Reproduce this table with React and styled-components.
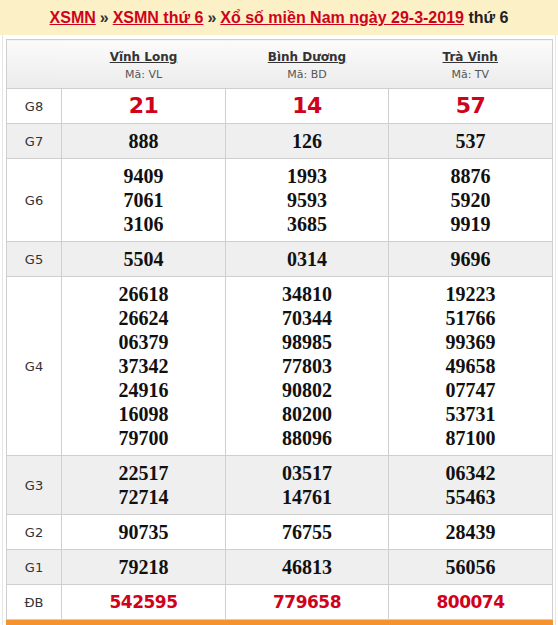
import React from "react";
import styled, { createGlobalStyle } from "styled-components";

const GlobalStyle = createGlobalStyle`
  html, body {
    margin: 0;
    padding: 0;
    overflow: hidden;
    background: #fff;
  }
`;

const TitleBar = styled.div`
  height: 35px;
  line-height: 35px;
  background-color: #fcf0c6;
  text-align: center;
  font-family: "Liberation Sans", Arial, sans-serif;
  font-weight: bold;
  font-size: 16px;
  color: #222;
`;

const TitleLink = styled.a`
  color: #d0021b;
  text-decoration: underline;
`;

const Sep = styled.span`
  color: #333;
  margin: 0 4px;
`;

const Wrapper = styled.div`
  margin: 0 2px;
  padding: 4px 3px 0;
  border-left: 1px solid #e6e6e6;
  border-right: 1px solid #e6e6e6;
`;

const Table = styled.table`
  width: 546px;
  border-collapse: collapse;
  table-layout: fixed;
  border: 1px solid #cfcfcf;
`;

const HeadCell = styled.th`
  padding: 9px 0 5px;
  font-weight: normal;
  text-align: center;
  background: linear-gradient(to bottom, #fbfbfb 0%, #ebebeb 100%);
  border-bottom: 1px solid #cfcfcf;
`;

const Province = styled.a`
  display: block;
  line-height: 17px;
  font-family: "DejaVu Sans", Verdana, sans-serif;
  font-weight: bold;
  font-size: 12px;
  color: #333;
  text-decoration: underline;
`;

const Code = styled.div`
  line-height: 17px;
  font-family: "DejaVu Sans", Verdana, sans-serif;
  font-size: 11px;
  color: #555;
`;

const Row = styled.tr`
  background-color: ${(p) => (p.$alt ? "#efefef" : "#fff")};
`;

const Label = styled.td`
  padding: 5px 0;
  text-align: center;
  vertical-align: middle;
  border: 1px solid #cfcfcf;
  font-family: "DejaVu Sans", Verdana, sans-serif;
  font-size: 13px;
  color: #333;
`;

const Cell = styled.td`
  padding: 5px 0;
  text-align: center;
  vertical-align: middle;
  border: 1px solid #cfcfcf;
`;

const Num = styled.div`
  line-height: 24px;
  font-family: ${(p) =>
    p.$red ? '"DejaVu Sans", Verdana, sans-serif' : '"Liberation Serif", "Times New Roman", serif'};
  font-weight: bold;
  font-size: ${(p) => (p.$big ? "22px" : p.$red ? "17px" : "20px")};
  letter-spacing: ${(p) => (p.$big ? "-0.6px" : p.$red ? "-0.5px" : "0")};
  color: ${(p) => (p.$red ? "#d0021b" : "#111")};
`;

const Footer = styled.div`
  height: 6px;
  width: 547px;
  background-color: #f5932f;
`;

const provinces = [
  { name: "Vĩnh Long", code: "VL" },
  { name: "Bình Dương", code: "BD" },
  { name: "Trà Vinh", code: "TV" },
];

const prizes = [
  { label: "G8", red: true, big: true, values: [["21"], ["14"], ["57"]] },
  { label: "G7", values: [["888"], ["126"], ["537"]] },
  {
    label: "G6",
    values: [
      ["9409", "7061", "3106"],
      ["1993", "9593", "3685"],
      ["8876", "5920", "9919"],
    ],
  },
  { label: "G5", values: [["5504"], ["0314"], ["9696"]] },
  {
    label: "G4",
    values: [
      ["26618", "26624", "06379", "37342", "24916", "16098", "79700"],
      ["34810", "70344", "98985", "77803", "90802", "80200", "88096"],
      ["19223", "51766", "99369", "49658", "07747", "53731", "87100"],
    ],
  },
  {
    label: "G3",
    values: [
      ["22517", "72714"],
      ["03517", "14761"],
      ["06342", "55463"],
    ],
  },
  { label: "G2", values: [["90735"], ["76755"], ["28439"]] },
  { label: "G1", values: [["79218"], ["46813"], ["56056"]] },
  { label: "ĐB", red: true, values: [["542595"], ["779658"], ["800074"]] },
];

const App = () => {
  return (
    <>
      <GlobalStyle />
      <TitleBar>
        <TitleLink href="#">XSMN</TitleLink>
        <Sep>»</Sep>
        <TitleLink href="#">XSMN thứ 6</TitleLink>
        <Sep>»</Sep>
        <TitleLink href="#">Xổ số miền Nam ngày 29-3-2019</TitleLink> thứ 6
      </TitleBar>
      <Wrapper>
        <Table>
          <colgroup>
            <col style={{ width: 55 }} />
            <col style={{ width: 164 }} />
            <col style={{ width: 163 }} />
            <col style={{ width: 164 }} />
          </colgroup>
          <thead>
            <tr>
              <HeadCell />
              {provinces.map((p) => (
                <HeadCell key={p.code}>
                  <Province href="#">{p.name}</Province>
                  <Code>Mã: {p.code}</Code>
                </HeadCell>
              ))}
            </tr>
          </thead>
          <tbody>
            {prizes.map((row, i) => (
              <Row key={row.label} $alt={i % 2 === 1}>
                <Label>{row.label}</Label>
                {row.values.map((nums, j) => (
                  <Cell key={j}>
                    {nums.map((n) => (
                      <Num key={n} $red={row.red} $big={row.big}>
                        {n}
                      </Num>
                    ))}
                  </Cell>
                ))}
              </Row>
            ))}
          </tbody>
        </Table>
        <Footer />
      </Wrapper>
    </>
  );
};

export default App;
